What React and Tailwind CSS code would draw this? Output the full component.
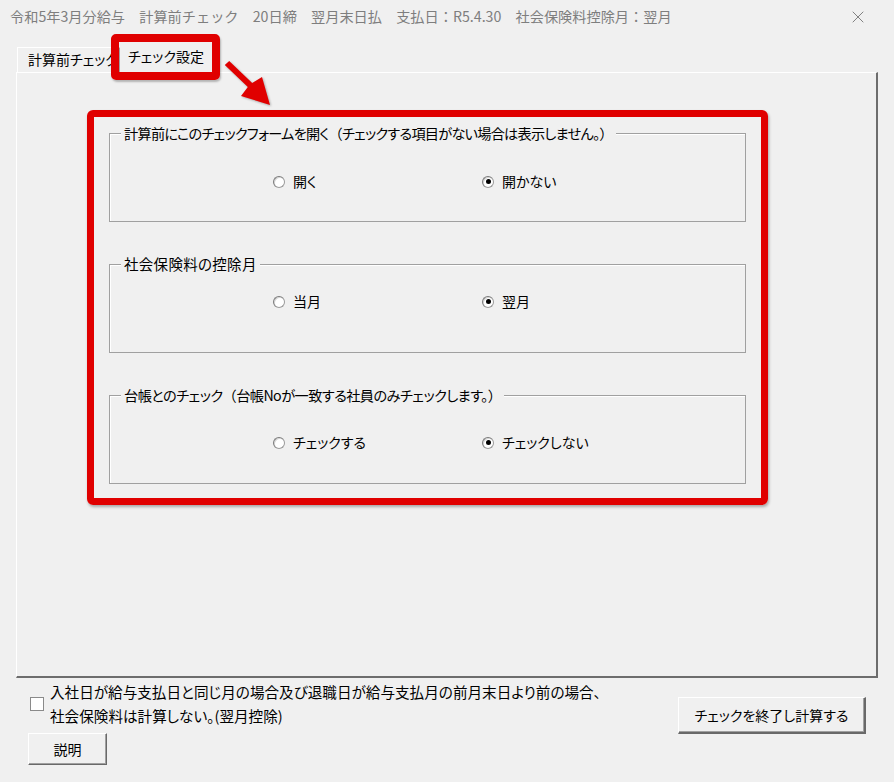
import { X } from 'lucide-react';

const FONT = "font-['Noto_Sans_CJK_JP','Noto_Sans',sans-serif]";

function Radio({ checked, label }) {
  return (
    <label className="flex items-center gap-[8px] text-[14px] leading-none text-black">
      <span className="w-[12px] h-[12px] rounded-full bg-white border border-[#9a9a9a] border-t-[#7a7a7a] border-l-[#7a7a7a] flex items-center justify-center shadow-[inset_1px_1px_0_#d6d6d6]">
        {checked && <span className="w-[5px] h-[5px] rounded-full bg-black" />}
      </span>
      <span className="[font-feature-settings:'palt'] -mt-[1px]">{label}</span>
    </label>
  );
}

// 全角括弧だけはプロポーショナルにしない
function JpText({ text }) {
  return text.split(/([（）])/).map((part, i) =>
    part === '（' || part === '）' ? (
      <span key={i} className="[font-feature-settings:normal]">{part}</span>
    ) : (
      part
    )
  );
}

function GroupBox({ title, titleClass, options, selected, pad }) {
  return (
    <div className="relative h-[89px] border border-[#a0a0a0] shadow-[inset_1px_1px_0_#fff]">
      <span className={`absolute left-[11px] -top-[11px] px-[3px] bg-[#f0f0f0] leading-[20px] whitespace-nowrap [font-feature-settings:'palt'] ${titleClass}`}>
        <JpText text={title} />
      </span>
      <div className={`flex pl-[163px] ${pad}`}>
        {options.map((opt, i) => (
          <div key={opt} className="w-[209px]">
            <Radio checked={i === selected} label={opt} />
          </div>
        ))}
      </div>
    </div>
  );
}

export default function App() {
  return (
    <div className={`${FONT} w-[894px] h-[782px] bg-[#f0f0f0] text-black relative overflow-hidden`}>
      {/* タイトルバー */}
      <div className="h-[33px] flex items-center justify-between pl-[10px] pr-[26px]">
        <span className="text-[14.2px] text-[#7e7e7e] whitespace-pre">
          令和5年3月分給与　計算前チェック　20日締　翌月末日払　支払日：R5.4.30　社会保険料控除月：翌月
        </span>
        <X className="w-[20px] h-[20px] text-[#6a6a6a]" strokeWidth={1} />
      </div>

      {/* タブ */}
      <div className="h-[39px] flex items-end pl-[17px]">
        <div className="h-[25px] w-[103px] border-t border-l border-white border-r border-r-[#a0a0a0] pl-[10px] text-[14px] leading-[23px] [font-feature-settings:'palt'] whitespace-nowrap overflow-hidden">
          計算前チェック
        </div>
        <div className="relative z-10 h-[30px] w-[92px] bg-[#f0f0f0] text-[14px] leading-[28px] text-center [font-feature-settings:'palt']">
          チェック設定
          <div className="absolute -left-[9px] -right-[8px] -top-[8px] -bottom-[8px] border-[8px] border-[#e00000] rounded-[5px] shadow-[1px_2px_2px_rgba(0,0,0,0.25)]" />
        </div>
      </div>

      {/* 矢印 */}
      <svg className="absolute left-[220px] top-[58px] w-[60px] h-[52px] z-10" viewBox="0 0 60 52">
        <polygon
          points="4.8,7.1 9.2,2.9 32.2,24.9 42,19 50,47 21,38 27.8,29.1"
          fill="#e00000"
          style={{ filter: 'drop-shadow(1px 1px 1px rgba(0,0,0,0.3))' }}
        />
      </svg>

      {/* パネル */}
      <div className="ml-[16px] w-[862px] h-[606px] border-t border-l border-white border-r-2 border-b-2 border-r-[#6d6d6d] border-b-[#6d6d6d]">
        <div className="ml-[70px] mt-[37px] w-[681px] h-[395px] border-[7px] border-[#e00000] rounded-[6px] shadow-[1px_2px_3px_rgba(0,0,0,0.3)] px-[15px] pt-[16px] flex flex-col gap-[42px]">
          <GroupBox
            title="計算前にこのチェックフォームを開く（チェックする項目がない場合は表示しません。）"
            titleClass="text-[14.2px] tracking-[-0.75px]"
            options={['開く', '開かない']}
            selected={1}
            pad="pt-[41px]"
          />
          <GroupBox
            title="社会保険料の控除月"
            titleClass="text-[14.5px] tracking-[0.3px]"
            options={['当月', '翌月']}
            selected={1}
            pad="pt-[30px]"
          />
          <GroupBox
            title="台帳とのチェック（台帳Noが一致する社員のみチェックします。）"
            titleClass="text-[14.2px] tracking-[-0.55px]"
            options={['チェックする', 'チェックしない']}
            selected={1}
            pad="pt-[40px]"
          />
        </div>
      </div>

      {/* 下部 */}
      <div className="flex justify-between pl-[28px] pr-[28px] pt-[2px]">
        <div className="flex flex-col">
          <div className="flex items-center">
            <span className="ml-[2px] w-[14px] h-[14px] bg-white border border-[#8a8a8a]" />
            <div className="ml-[6px] text-[14.6px] leading-[24px] [font-feature-settings:'palt'] whitespace-nowrap">
              <div>入社日が給与支払日と同じ月の場合及び退職日が給与支払月の前月末日より前の場合、</div>
              <div>社会保険料は計算しない。(翌月控除)</div>
            </div>
          </div>
          <button className="mt-[5px] w-[79px] h-[32px] bg-[#f0f0f0] border border-white border-r-[#696969] border-b-[#696969] shadow-[inset_-1px_-1px_0_#a0a0a0] text-[14px] [font-feature-settings:'palt']">
            説明
          </button>
        </div>
        <button className="mt-[17px] w-[188px] h-[37px] bg-[#f0f0f0] border border-white border-r-2 border-b-2 border-r-[#696969] border-b-[#696969] shadow-[inset_-1px_-1px_0_#a0a0a0] text-[14px] [font-feature-settings:'palt']">
          チェックを終了し計算する
        </button>
      </div>
    </div>
  );
}
